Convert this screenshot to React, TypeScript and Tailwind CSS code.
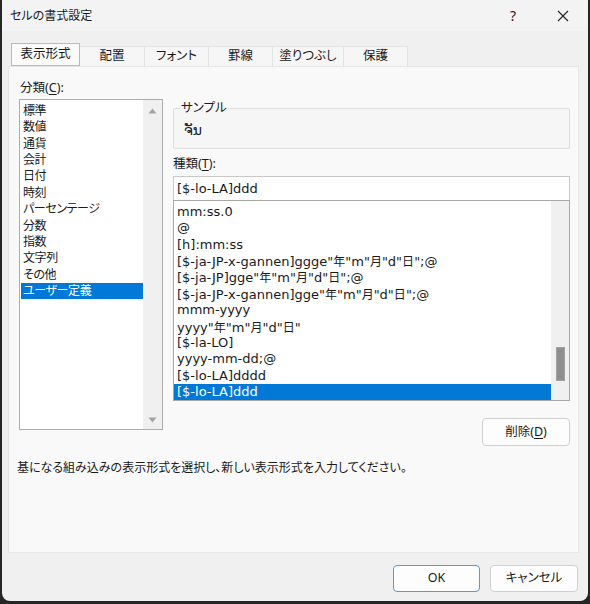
import React from "react";

const leftItems = [
  "標準",
  "数値",
  "通貨",
  "会計",
  "日付",
  "時刻",
  "パーセンテージ",
  "分数",
  "指数",
  "文字列",
  "その他",
  "ユーザー定義",
];

const rightItems = [
  "mm:ss.0",
  "@",
  "[h]:mm:ss",
  '[$-ja-JP-x-gannen]ggge"年"m"月"d"日";@',
  '[$-ja-JP]gge"年"m"月"d"日";@',
  '[$-ja-JP-x-gannen]gge"年"m"月"d"日";@',
  "mmm-yyyy",
  'yyyy"年"m"月"d"日"',
  "[$-la-LO]",
  "yyyy-mm-dd;@",
  "[$-lo-LA]dddd",
  "[$-lo-LA]ddd",
];

const tabs = [
  { label: "配置", w: "w-[65px]" },
  { label: "フォント", w: "w-[64px]" },
  { label: "罫線", w: "w-[64px]" },
  { label: "塗りつぶし", w: "w-[71px]" },
  { label: "保護", w: "w-[64px]" },
];

const LATIN = "'DejaVu Sans', 'Noto Sans CJK JP', sans-serif";
const CJK = "'Noto Sans CJK JP', sans-serif";

function Mixed({ text }: { text: string }) {
  const parts = text.split(/([年月日]+)/);
  return (
    <>
      {parts.map((p, i) =>
        /[年月日]/.test(p) ? (
          <span key={i} className="text-[12px]" style={{ fontFamily: CJK }}>
            {p}
          </span>
        ) : (
          <span key={i}>{p}</span>
        )
      )}
    </>
  );
}

function TriUp() {
  return (
    <svg width="9" height="6" viewBox="0 0 9 6">
      <path d="M4.5 0.5 L8.5 5.5 L0.5 5.5 Z" fill="#a3a3a3" />
    </svg>
  );
}
function TriDown() {
  return (
    <svg width="9" height="6" viewBox="0 0 9 6">
      <path d="M0.5 0.5 L8.5 0.5 L4.5 5.5 Z" fill="#a3a3a3" />
    </svg>
  );
}

export default function App() {
  return (
    <div
      className="w-[590px] h-[604px] bg-[#262626] overflow-hidden text-[#1a1a1a] [font-feature-settings:'palt']"
      style={{ fontFamily: "'Noto Sans', 'Noto Sans CJK JP', sans-serif" }}
    >
      <div className="ml-[2px] w-[586px] h-[601px] bg-[#f0f0f0] rounded-b-[8px] flex flex-col">
        {/* title bar */}
        <div className="h-[31px] flex items-center bg-[#f3f3f3]">
          <div className="pl-[8px] text-[12px] leading-[16px]">セルの書式設定</div>
          <div className="ml-auto flex items-center gap-[4px] pr-[2px]">
            <div className="w-[46px] h-[31px] flex items-center justify-center text-[14px] text-[#222]">?</div>
            <div className="w-[46px] h-[31px] flex items-center justify-center">
              <svg width="12" height="12" viewBox="0 0 12 12">
                <path d="M1 1 L11 11 M11 1 L1 11" stroke="#222" strokeWidth="1.1" />
              </svg>
            </div>
          </div>
        </div>

        {/* tabs */}
        <div className="h-[35px] flex items-end pl-[9px] text-[12.5px]">
          <div className="w-[69px] h-[23px] border border-[#b9b9b9] bg-[#fbfbfb] flex items-center justify-center">
            表示形式
          </div>
          {tabs.map((t) => (
            <div
              key={t.label}
              className={`${t.w} h-[20px] border border-b-0 border-l-0 border-[#e3e3e3] bg-[#f6f6f6] flex items-center justify-center`}
            >
              {t.label}
            </div>
          ))}
        </div>

        {/* panel */}
        <div className="ml-[6px] w-[571px] h-[487px] bg-[#f9f9f9] border border-[#e6e6e6] flex flex-col text-[12.5px]">
          <div className="flex">
            {/* left column */}
            <div className="ml-[10px] mt-[13px] flex flex-col">
              <div className="h-[16px] leading-[16px] pl-[1px]">
                分類(<span className="underline underline-offset-2">C</span>):
              </div>
              <div className="mt-[3px] w-[144px] h-[331px] border border-[#adadad] bg-white flex">
                <div className="w-[123px] pt-[3px] flex flex-col text-[12px] tracking-[-0.4px]">
                  {leftItems.map((it, i) => (
                    <div
                      key={it}
                      className={`h-[16.36px] leading-[16.36px] pl-[2px] ml-[1px] whitespace-nowrap ${
                        i === 11 ? "bg-[#0078d7] text-white" : ""
                      }`}
                    >
                      {it}
                    </div>
                  ))}
                </div>
                <div className="w-[19px] bg-[#f0f0f0] flex flex-col items-center justify-between pt-[8px] pb-[6px]">
                  <TriUp />
                  <TriDown />
                </div>
              </div>
            </div>

            {/* right column */}
            <div className="ml-[10px] mt-[33px] w-[397px] flex flex-col">
              <fieldset className="h-[49px] border border-[#dedede] rounded-[2px] bg-[#f6f6f6]">
                <legend className="ml-[6px] px-[1px] leading-[16px] h-[16px]">サンプル</legend>
                <div
                  className="pl-[10px] pt-[4px] text-[14px] leading-[20px]"
                  style={{ fontFamily: "'DejaVu Sans', 'Noto Sans', sans-serif" }}
                >
                  ຈັນ
                </div>
              </fieldset>
              <div className="mt-[7px] h-[16px] leading-[16px]">
                種類(<span className="underline underline-offset-2">T</span>):
              </div>
              <div
                className="mt-[4px] h-[24px] border border-[#c8c8c8] border-b-0 bg-white flex items-center pl-[3px] text-[13px]"
                style={{ fontFamily: LATIN }}
              >
                [$-lo-LA]ddd
              </div>
              <div className="h-[201px] border border-[#a8a8a8] bg-white flex">
                <div className="w-[377px] pt-[3px] flex flex-col text-[13px]" style={{ fontFamily: LATIN }}>
                  {rightItems.map((it, i) => (
                    <div
                      key={it}
                      className={`h-[16.36px] leading-[16.36px] pl-[3px] whitespace-nowrap ${
                        i === 11 ? "bg-[#0078d7] text-white" : ""
                      }`}
                    >
                      <Mixed text={it} />
                    </div>
                  ))}
                </div>
                <div className="w-[18px] bg-[#f0f0f0] flex flex-col items-center">
                  <div className="mt-[146px] w-[9px] h-[34px] bg-[#8f8f8f] border border-[#a0a0a0]" />
                </div>
              </div>
              <button className="mt-[17px] self-end w-[88px] h-[28px] border border-[#d0d0d0] rounded-[4px] bg-[#fdfdfd] flex items-center justify-center">
                削除(<span className="underline underline-offset-2">D</span>)
              </button>
            </div>
          </div>
          <div className="mt-[14px] ml-[8px] h-[16px] leading-[16px] whitespace-nowrap text-[12px]">
            基になる組み込みの表示形式を選択し、新しい表示形式を入力してください。
          </div>
        </div>

        {/* footer */}
        <div className="flex justify-end gap-[10px] pr-[10px] mt-[12px] text-[12.5px]">
          <button className="w-[87px] h-[27px] border border-[#5b9bd5] rounded-[4px] bg-[#fdfdfd] flex items-center justify-center">
            OK
          </button>
          <button className="w-[88px] h-[27px] border border-[#d0d0d0] rounded-[4px] bg-[#fdfdfd] flex items-center justify-center">
            キャンセル
          </button>
        </div>
      </div>
    </div>
  );
}
